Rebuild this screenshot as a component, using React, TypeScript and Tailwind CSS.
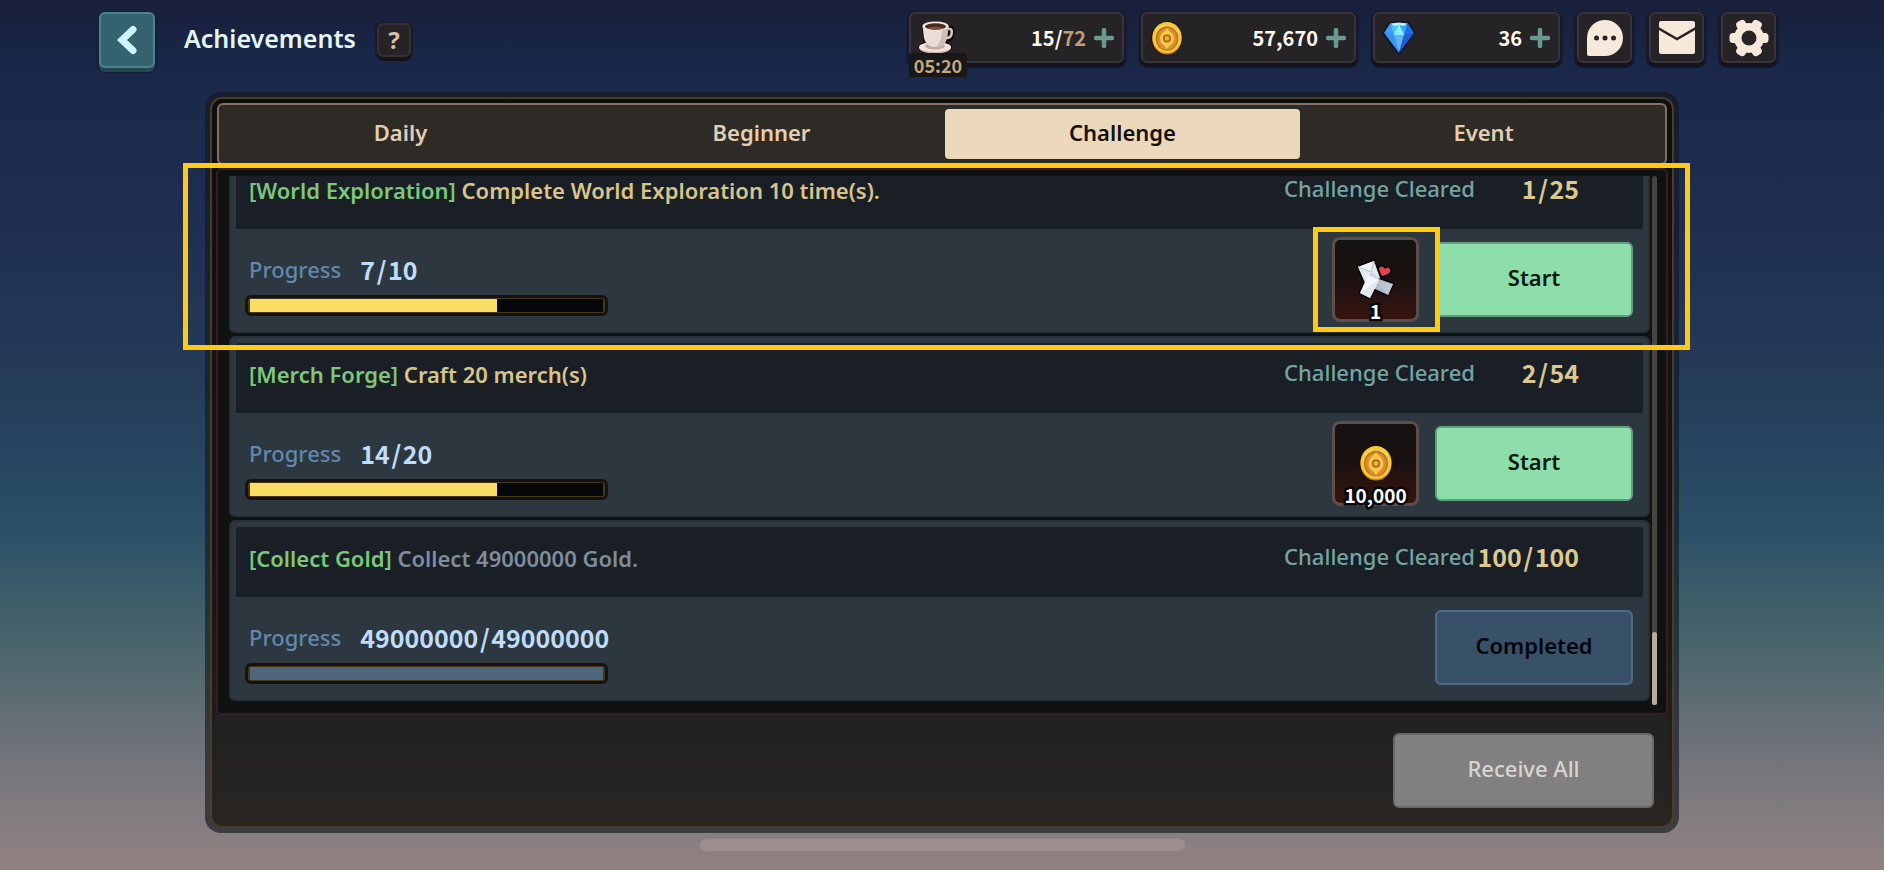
import type { ReactNode } from "react";
import clsx from "clsx";

type Reward = { icon: "letters" | "coin"; amount: string };

type Challenge = {
  tag: string;
  text: string;
  cleared: [string, string];
  progress: [string, string];
  percent: number;
  reward?: Reward;
};

const tabs = ["Daily", "Beginner", "Challenge", "Event"];

const challenges: Challenge[] = [
  {
    tag: "[World Exploration]",
    text: "Complete World Exploration 10 time(s).",
    cleared: ["1", "25"],
    progress: ["7", "10"],
    percent: 70,
    reward: { icon: "letters", amount: "1" },
  },
  {
    tag: "[Merch Forge]",
    text: "Craft 20 merch(s)",
    cleared: ["2", "54"],
    progress: ["14", "20"],
    percent: 70,
    reward: { icon: "coin", amount: "10,000" },
  },
  {
    tag: "[Collect Gold]",
    text: "Collect 49000000 Gold.",
    cleared: ["100", "100"],
    progress: ["49000000", "49000000"],
    percent: 100,
  },
];

const CoffeeIcon = () => (
  <svg viewBox="0 0 38 36" className="h-9 w-[38px]" aria-hidden="true">
    <g stroke="#120d10" strokeWidth="3" fill="#120d10">
      <ellipse cx="17" cy="27.500" rx="15.500" ry="5.500" />
      <path d="M5 6 Q18 0 30 6 L28 22 Q25 27 18 27 Q10 27 7 22 Z" />
      <path d="M29 9 h4 q1.500 4 0 8 q-1 2 -5 2" fill="none" strokeWidth="6" />
    </g>
    <ellipse cx="17" cy="28" rx="16" ry="5.500" fill="#cbb5ad" />
    <ellipse cx="17" cy="27" rx="16" ry="5" fill="#f1e4dd" />
    <ellipse cx="17" cy="26" rx="10" ry="3.500" fill="#c2aaa3" />
    <path d="M29 9 h3 q2.500 .5 1.500 5 q-.5 4 -5.500 4" fill="none" stroke="#d8c8c2" strokeWidth="2.600" />
    <path d="M4.500 6 L6 18 Q8 27 17.500 27 Q27 27 29 18 L30.500 6 Z" fill="#eadcd6" />
    <path d="M24 10 L30.500 6 L29 18 Q27 27 17.500 27 Q24 22 24 10Z" fill="#d0bfb9" />
    <ellipse cx="17.500" cy="6" rx="13" ry="4.500" fill="#f3e9e4" />
    <ellipse cx="17.500" cy="6.500" rx="10.500" ry="3.200" fill="#4a2a20" />
    <path d="M9 8 Q17.500 11.500 26 8 Q17.500 5.500 9 8Z" fill="#7d513c" />
  </svg>
);

const CoinIcon = ({ className }: { className: string }) => (
  <svg viewBox="0 0 36 38" className={className} aria-hidden="true">
    <ellipse cx="18" cy="19.500" rx="17" ry="18" fill="#1c120c" />
    <ellipse cx="18" cy="20" rx="15.500" ry="16.500" fill="#c77f1d" />
    <ellipse cx="18" cy="18.500" rx="15.500" ry="16.500" fill="#f6c73a" />
    <path d="M4 15 A15.500 16.500 0 0 1 32 15 A16 15 0 0 0 4 15Z" fill="#ffe35c" />
    <ellipse cx="18" cy="19.500" rx="12" ry="13" fill="#bd7426" />
    <ellipse cx="18" cy="20" rx="10.500" ry="11.500" fill="#d98f2c" />
    <path d="M18 8.500 L21 12 Q25 14 25.500 19.500 Q25 25 21 27 L18 31 L15 27 Q11 25 10.500 19.500 Q11 14 15 12 Z" fill="#f7c84a" />
    <circle cx="18" cy="19.500" r="3.400" fill="#f0b43a" stroke="#a8621c" strokeWidth="1.800" />
  </svg>
);

const GemIcon = () => (
  <svg viewBox="0 0 34 36" className="h-9 w-[34px]" aria-hidden="true">
    <path d="M8 3.500 L17 2.500 L26 3.500 L32 13 L17 33 L2 13 Z" fill="#2474e0" stroke="#0a1428" strokeWidth="3" strokeLinejoin="round" />
    <path d="M2 13 L8 3.500 L12 15 Z" fill="#3f9bf5" />
    <path d="M8 3.500 L17 2.500 L26 3.500 L22 6 L12 6 Z" fill="#bdf3ff" />
    <path d="M8 3.500 L12 6 L17 5 L12 15 Z" fill="#4fc3fa" />
    <path d="M26 3.500 L22 6 L17 5 L22 15 Z" fill="#3aa6f7" />
    <path d="M17 4.500 L22.500 15 L11.500 15 Z" fill="#86efff" />
    <path d="M26 3.500 L32 13 L22 15 Z" fill="#1f6fe6" />
    <path d="M2 13 L12 15 L17 33 Z" fill="#3b93f3" />
    <path d="M12 15 L22 15 L17 33 Z" fill="#62b4f8" />
    <path d="M22 15 L32 13 L17 33 Z" fill="#1c5fd0" />
  </svg>
);

const LettersIcon = () => (
  <svg viewBox="0 0 40 40" className="h-10 w-10" aria-hidden="true">
    <g stroke="#060606" strokeWidth="3" strokeLinejoin="round">
      <path d="M20 19 L37 25 L32 36 L17 29 Z" fill="#b4c0d0" />
      <path d="M2 8 L18 2 L24 19 L10 26 Z" fill="#dfe5ec" />
      <path d="M12 16 L23 21 L14 39 L4 34 Z" fill="#eef1f5" />
      <path d="M26 17 L23 11 Q23 7 26 7.500 Q28.500 8 29 10 Q32 7 34 10 Q35 13 32 15 Z" fill="#d9414f" />
    </g>
    <path d="M20 19 L37 25 L32 36 L17 29 Z" fill="#aebccd" />
    <path d="M22 23 L37 25 L32 36 Z" fill="#bcc8d6" />
    <path d="M2 8 L18 2 L24 19 L10 26 Z" fill="#e3e9f0" />
    <path d="M2 8 L15 13 L18 2" fill="#eff3f7" stroke="#b3bfcc" />
    <path d="M10 26 L15 13 L24 19" fill="#ccd6e0" />
    <path d="M12 16 L23 21 L14 39 L4 34 Z" fill="#f3f5f8" />
    <path d="M23 21 L14 39 L4 34 Z" fill="#e3e8ee" />
    <path d="M26 17 L23 11 Q23 7 26 7.500 Q28.500 8 29 10 Q32 7 34 10 Q35 13 32 15 Z" fill="#dc4453" />
  </svg>
);

const PlusIcon = () => (
  <svg viewBox="0 0 20 20" className="size-5" aria-hidden="true">
    <path d="M10 2 V18 M2 10 H18" stroke="#6a998f" strokeWidth="4.500" strokeLinecap="round" />
  </svg>
);

const ChatIcon = () => (
  <svg viewBox="0 0 38 38" className="size-[38px]" aria-hidden="true">
    <path d="M19 1 A18 18 0 1 1 19 37 H3 Q1 37 1 35 V19 A18 18 0 0 1 19 1Z" fill="#f7e9da" />
    <circle cx="10.500" cy="19" r="2.500" fill="#262326" />
    <circle cx="19" cy="19" r="2.500" fill="#262326" />
    <circle cx="27.500" cy="19" r="2.500" fill="#262326" />
  </svg>
);

const MailIcon = () => (
  <svg viewBox="0 0 38 38" className="size-[38px]" aria-hidden="true">
    <rect x="1" y="2" width="36" height="33" rx="2" fill="#f7e9da" />
    <path d="M0 9 L19 20 L38 9" fill="none" stroke="#262326" strokeWidth="2.500" />
  </svg>
);

const GearIcon = () => (
  <svg viewBox="-20 -20 40 40" className="size-10" aria-hidden="true">
    <g fill="#f7e9da">
      <circle r="15" />
      <rect x="-19.500" y="-5" width="39" height="10" rx="3.500" />
      <rect x="-19.500" y="-5" width="39" height="10" rx="3.500" transform="rotate(60)" />
      <rect x="-19.500" y="-5" width="39" height="10" rx="3.500" transform="rotate(120)" />
    </g>
    <circle r="7.500" fill="#262326" />
  </svg>
);

const chip =
  "h-[51px] rounded-md border-2 border-[#38343a] bg-[#262326] shadow-[0_4px_0_#15131b,0_2px_0_3px_#151a30]";

// these digits have the footed 1 and the plain 0
const digits = "font-['Noto_Sans_CJK_JP',sans-serif] font-bold";

const Resource = ({ icon, label, children, className }: {
  icon: ReactNode;
  label: string;
  children: ReactNode;
  className: string;
}) => (
  <div className={clsx(chip, "relative flex items-center pr-2 pl-[7px]", className)}>
    {icon}
    <span className={clsx(digits, "ml-auto text-xl leading-6 text-[#fdf8f0]")}>{children}</span>
    <button type="button" aria-label={`Add ${label}`} className="ml-2">
      <PlusIcon />
    </button>
  </div>
);

const Fraction = ({ value, className }: { value: [string, string]; className: string }) => (
  <span className={clsx(digits, "text-[25px] leading-8 whitespace-nowrap", className)}>
    {value[0]}
    <span className="inline-block w-[13px] text-center">/</span>
    {value[1]}
  </span>
);

const RewardTile = ({ icon, amount }: Reward) => (
  <div className="relative flex h-[85px] w-[87px] items-center justify-center rounded-lg border-3 border-[#5c4e49] bg-linear-to-b from-[#141211] via-[#1a1110] to-[#38140f]">
    {icon === "letters" ? <LettersIcon /> : <CoinIcon className="h-[38px] w-9" />}
    <span
      className={clsx(
        digits,
        "absolute inset-x-0 -bottom-1 text-center text-[19px] leading-6 text-white [paint-order:stroke_fill] [-webkit-text-stroke:5px_#0a0707]",
      )}
    >
      {amount}
    </span>
  </div>
);

const ChallengeRow = ({ item }: { item: Challenge }) => {
  const done = item.percent === 100;

  return (
    <li className="rounded-md border-2 border-[#263038] bg-[#2d3740] px-[5px] pt-[5px] pb-1.5">
      <div className="flex h-[70px] items-start rounded-xs bg-[#1a1e25] pt-[15px] pr-16 pl-[13px] text-[22px] leading-8">
        <h2 className="font-semibold text-[#7cc77a]">
          {item.tag} <span className={done ? "text-[#7d8d9e]" : "text-[#d8c48c]"}>{item.text}</span>
        </h2>
        <div className="-mt-0.5 ml-auto flex">
          <span className="font-medium text-[#74a5a3]">Challenge Cleared</span>
          <Fraction value={item.cleared} className="w-[104px] text-right text-[#dcc990]" />
        </div>
      </div>
      <div className="flex h-24 items-center pt-1 pr-2.5 pl-[9px]">
        <div className="w-[363px] pt-2.5">
          <div className="flex items-center gap-[19px] pl-1 whitespace-nowrap">
            <span className="text-[22px] leading-8 font-medium text-[#6189ae]">Progress</span>
            <Fraction value={item.progress} className="text-[#bfdcfb]" />
          </div>
          <div className="mt-2.5 h-[21px] rounded-md border-3 border-[#15130f] bg-[#463719] px-0.5 py-px">
            <div className="h-full bg-[#050607]">
              <div
                role="progressbar"
                aria-label={`${item.tag} progress`}
                aria-valuenow={item.percent}
                className={clsx("h-full", done ? "bg-[#4d667d]" : "bg-[#f8dc64]")}
                style={{ width: `${item.percent}%` }}
              />
            </div>
          </div>
        </div>
        <div className="ml-auto flex items-center gap-4">
          {item.reward && <RewardTile {...item.reward} />}
          <button
            type="button"
            disabled={done}
            className={clsx(
              "h-[75px] w-[198px] rounded-md border-2 pb-1 text-[22px] font-semibold",
              done
                ? "border-[#4b6b8b] bg-[#385168] text-[#03070d]"
                : "border-[#65a07d] bg-[#8edeab] text-[#0c1a12]",
            )}
          >
            {done ? "Completed" : "Start"}
          </button>
        </div>
      </div>
    </li>
  );
};

const App = () => (
  <div className="flex min-h-screen flex-col overflow-hidden bg-linear-[180deg,#181f3a_0%,#1a2748_7%,#1e2e50_25%,#243a57_42%,#274560_52%,#2b4e66_60%,#3f5f69_70%,#556a70_78%,#6a7078_84%,#807c80_93%,#928180_100%] font-['Noto_Sans',sans-serif]">
    <header className="flex items-start pt-3 pr-[108px] pl-[99px]">
      <button
        type="button"
        aria-label="Back"
        className="flex size-14 items-center justify-center rounded-md border-2 border-[#4b8490] bg-[#35626f] shadow-[0_4px_0_#24474f,0_2px_0_3px_#14203c]"
      >
        <svg viewBox="0 0 24 32" className="h-8 w-6" aria-hidden="true">
          <path d="M18 5.500 L7 16 L18 26.500" fill="none" stroke="#cdf3ff" strokeWidth="7" strokeLinecap="round" />
        </svg>
      </button>
      <h1 className="ml-[29px] text-[25px] leading-[52px] font-semibold text-[#e4f6f8]">Achievements</h1>
      <button
        type="button"
        aria-label="Help"
        className="mt-[11px] ml-[21px] size-[34px] rounded-md border-2 border-[#38322f] bg-[#262326] text-2xl leading-7 font-bold text-[#d8bfa6] shadow-[0_4px_0_#15131b,0_1px_0_2px_#151a30]"
      >
        ?
      </button>
      <div className="ml-auto flex gap-[17px]">
        <Resource
          label="stamina"
          className="w-[215px]"
          icon={
            <div className="flex flex-col items-center">
              <CoffeeIcon />
              <span
                className={clsx(digits, "absolute top-[39px] -left-0.5 w-[58px] rounded-xs bg-[#1a1718] text-center text-lg leading-6 text-[#c4a880]")}
              >
                05:20
              </span>
            </div>
          }
        >
          15/<span className="text-[#bd9f72]">72</span>
        </Resource>
        <Resource label="gold" className="w-[215px]" icon={<CoinIcon className="h-[38px] w-[34px]" />}>
          57,670
        </Resource>
        <Resource label="gems" className="w-[187px]" icon={<GemIcon />}>
          36
        </Resource>
        <button type="button" aria-label="Chat" className={clsx(chip, "flex w-[55px] items-center justify-center")}>
          <ChatIcon />
        </button>
        <button type="button" aria-label="Mail" className={clsx(chip, "flex w-[55px] items-center justify-center")}>
          <MailIcon />
        </button>
        <button type="button" aria-label="Settings" className={clsx(chip, "flex w-[55px] items-center justify-center")}>
          <GearIcon />
        </button>
      </div>
    </header>

    <main className="relative mx-[205px] mt-6 rounded-2xl bg-[#14181f]/65 p-[5px]">
      <div className="rounded-xl border-2 border-[#4a3d24] bg-linear-to-b from-[#0e0e10] via-[#171716] via-70% to-[#292523] p-1">
        <nav role="tablist" className="mx-px grid grid-cols-4 rounded-md border-2 border-[#857163] bg-[#2e2b27] px-px py-1">
          {tabs.map((tab) => (
            <button
              key={tab}
              type="button"
              role="tab"
              aria-selected={tab === "Challenge"}
              className={clsx(
                "mx-[3px] h-[50px] rounded-sm pb-1 text-[22px] font-semibold",
                tab === "Challenge" ? "bg-[#ecd8ba] text-[#15110d]" : "text-[#e3ceb3]",
              )}
            >
              {tab}
            </button>
          ))}
        </nav>

        <div className="mt-[3px] flex rounded-md border-2 border-[#381e1e] bg-[#101111] pt-1.5 pr-[9px] pb-2 pl-[11px]">
          <div className="mb-1 flex-1 overflow-hidden">
            <ul className="-mt-6 flex flex-col gap-[3px]">
              {challenges.map((item) => (
                <ChallengeRow key={item.tag} item={item} />
              ))}
            </ul>
          </div>
          <div className="ml-0.5 flex w-[5px] flex-col justify-end rounded-sm bg-[#494440]">
            <div className="h-[73px] rounded-sm bg-[#b9aaa2]" />
          </div>
        </div>

        <div className="flex justify-end bg-linear-to-b from-[#202221] to-[#292523] pt-[18px] pr-3.5 pb-3.5">
          <button
            type="button"
            disabled
            className="h-[75px] w-[261px] rounded-md border-2 border-[#686868] bg-[#808080] pb-1 text-[22px] font-medium text-[#d8d5cf]"
          >
            Receive All
          </button>
        </div>
      </div>

      {/* highlight frames over the first challenge and its reward */}
      <div className="pointer-events-none absolute top-[71px] -right-[11px] -left-[22px] h-[187px] border-5 border-[#ffc914]" />
      <div className="pointer-events-none absolute top-[135px] right-[239px] h-[105px] w-[127px] border-5 border-[#ffc914]" />
    </main>

    <div className="mx-auto mt-1.5 h-3 w-[485px] rounded-full bg-[#9b8f8f]" />
  </div>
);

export default App;
